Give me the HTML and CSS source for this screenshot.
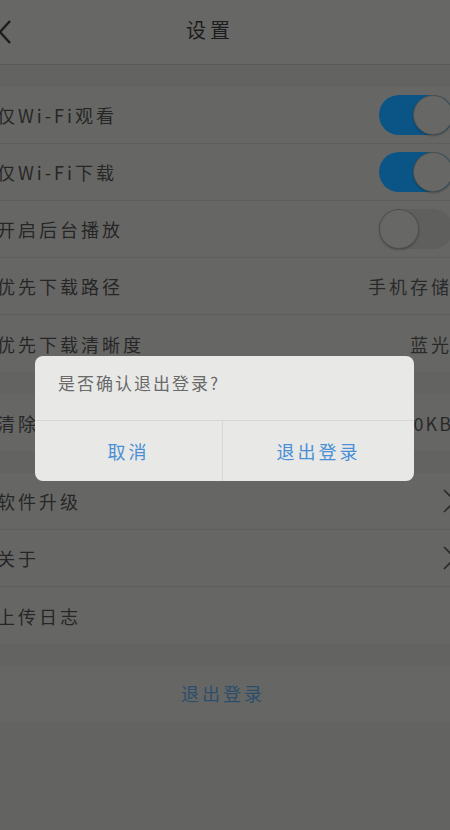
FILE: index.html
```html
<!DOCTYPE html>
<html>

<head>
  <meta charset="utf-8">
  <link rel="stylesheet" href="styles.css">
</head>

<body>

  <div class="page">
    <div class="header">
      <svg class="back" width="14" height="26" viewBox="0 0 14 26">
        <path d="M12 2 L2 13 L12 24" fill="none" stroke="#1c1c1c" stroke-width="2.4" />
      </svg>
      <div class="title">设置</div>
    </div>

    <div class="group">
      <div class="row">
        <span class="label">仅Wi-Fi观看</span>
        <span class="switch on"><i></i></span>
      </div>
      <div class="row">
        <span class="label">仅Wi-Fi下载</span>
        <span class="switch on"><i></i></span>
      </div>
      <div class="row">
        <span class="label">开启后台播放</span>
        <span class="switch"><i></i></span>
      </div>
      <div class="row">
        <span class="label">优先下载路径</span>
        <span class="value">手机存储</span>
      </div>
      <div class="row">
        <span class="label">优先下载清晰度</span>
        <span class="value">蓝光</span>
      </div>
    </div>

    <div class="group">
      <div class="row">
        <span class="label">清除缓存</span>
        <span class="value value-wide">10.0KB</span>
      </div>
    </div>

    <div class="group">
      <div class="row">
        <span class="label">软件升级</span>
        <svg class="arrow" width="14" height="24" viewBox="0 0 14 24">
          <path d="M1 1 L12 12 L1 23" fill="none" stroke="#2a2a2a" stroke-width="1.6" />
        </svg>
      </div>
      <div class="row">
        <span class="label">关于</span>
        <svg class="arrow" width="14" height="24" viewBox="0 0 14 24">
          <path d="M1 1 L12 12 L1 23" fill="none" stroke="#2a2a2a" stroke-width="1.6" />
        </svg>
      </div>
      <div class="row">
        <span class="label">上传日志</span>
      </div>
    </div>

    <div class="logout">退出登录</div>
  </div>

  <!-- confirm dialog over the dimmed page -->
  <div class="mask">
    <div class="dialog">
      <div class="dialog-text">是否确认退出登录?</div>
      <div class="dialog-btns">
        <div class="btn">取消</div>
        <div class="btn">退出登录</div>
      </div>
    </div>
  </div>

</body>

</html>
```

FILE: styles.css
```css
body {
  margin: 0;
  background-color: #636462;
  font-family: "Noto Sans CJK SC", "Noto Sans", sans-serif;
  overflow: hidden;
  height: 830px;
}

.page {
  width: 482px;
  margin-left: -18px;
}

/*********** Header ***********/
.header {
  height: 65px;
  display: flex;
  align-items: center;
  background-color: #676866;
  border-bottom: 1px solid #5a5b59;
  box-sizing: border-box;
}

.back {
  margin-left: 16px;
}

.title {
  flex: 1;
  text-align: center;
  font-size: 20px;
  letter-spacing: 4px;
  color: #1c1c1c;
  margin-right: 56px;
  margin-top: -6px;
}

/*********** Rows ***********/
.group {
  margin-top: 22px;
  background-color: #666765;
}

.row {
  height: 57px;
  display: flex;
  align-items: center;
  justify-content: space-between;
  padding: 0 15px;
  border-bottom: 1px solid #5e5f5d;
  box-sizing: border-box;
}

.row:last-child {
  border-bottom: none;
}

.label {
  font-size: 18px;
  letter-spacing: 3px;
  color: #262626;
}

.value {
  font-size: 18px;
  letter-spacing: 3px;
  color: #2a2a2a;
  margin-right: -3px;
}

.value-wide {
  margin-right: -4px;
  letter-spacing: 2px;
}

.arrow {
  margin-right: -8px;
}

/* switch */
.switch {
  width: 74px;
  height: 40px;
  border-radius: 20px;
  background-color: #5f605e;
  position: relative;
  margin-right: -4px;
  box-sizing: border-box;
}

.switch i {
  position: absolute;
  top: 0;
  left: 0;
  width: 40px;
  height: 40px;
  border-radius: 50%;
  background-color: #676866;
  border: 1px solid #4f504e;
  box-sizing: border-box;
  box-shadow: 0 1px 2px rgba(0, 0, 0, 0.25);
}

.switch.on {
  background-color: #0b5586;
}

.switch.on i {
  left: 34px;
}

/* bottom button */
.logout {
  margin-top: 22px;
  height: 56px;
  line-height: 54px;
  text-align: center;
  background-color: #666765;
  font-size: 18px;
  letter-spacing: 3px;
  color: #2c4e6b;
}

/*********** Dialog ***********/
.mask {
  position: fixed;
  left: 0;
  top: 0;
  right: 0;
  bottom: 0;
  display: flex;
  justify-content: center;
}

.dialog {
  margin-top: 356px;
  margin-left: -1px;
  width: 379px;
  height: 125px;
  border-radius: 8px;
  background-color: #e8e9e7;
  display: flex;
  flex-direction: column;
}

.dialog-text {
  height: 65px;
  box-sizing: border-box;
  padding: 14px 0 0 23px;
  font-size: 17px;
  letter-spacing: 2px;
  color: #6a6a6a;
  border-bottom: 1px solid #d6d7d5;
}

.dialog-btns {
  flex: 1;
  display: flex;
}

.btn {
  flex: 1;
  display: flex;
  align-items: center;
  justify-content: center;
  font-size: 18px;
  letter-spacing: 3px;
  color: #4a8fd4;
}

.btn + .btn {
  border-left: 1px solid #d6d7d5;
  flex: 1.02;
}
```
